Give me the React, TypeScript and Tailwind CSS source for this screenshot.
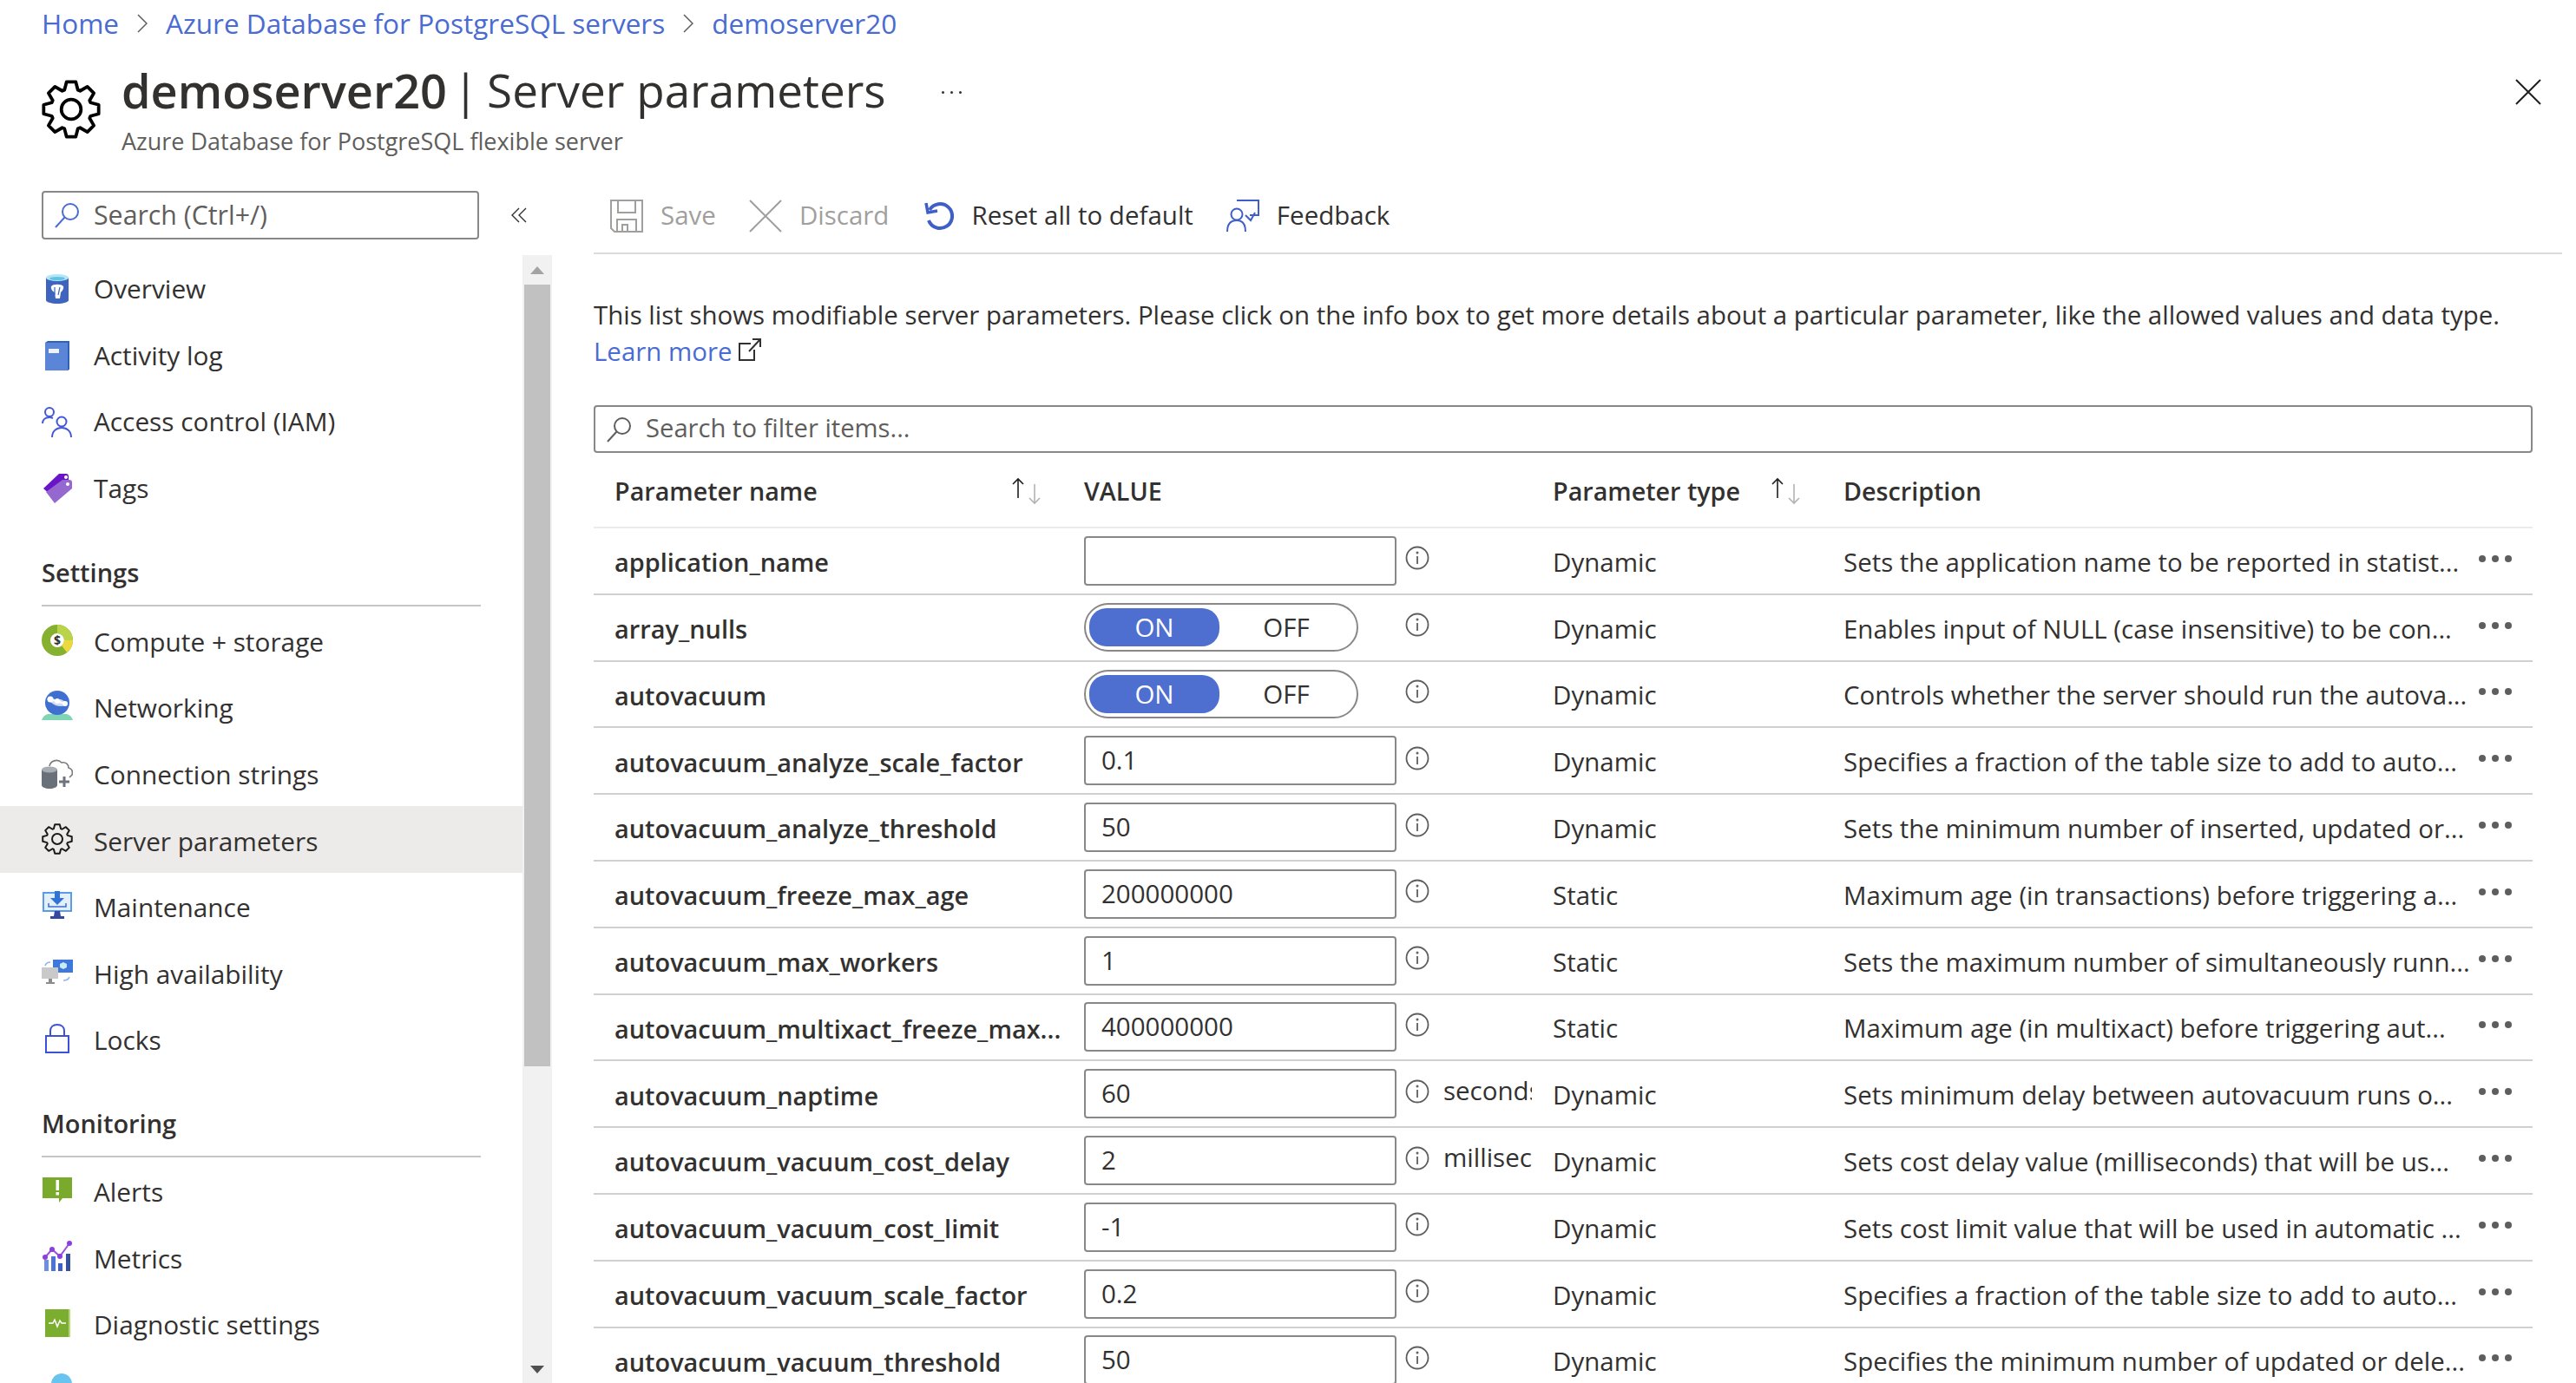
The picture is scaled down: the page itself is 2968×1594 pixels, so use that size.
const gearPath = (cx: number, cy: number, outer: number, inner: number, teeth: number) => {
  const pts: string[] = [];
  for (let i = 0; i < teeth; i++) {
    const a = (i * 2 * Math.PI) / teeth - Math.PI / 2;
    const w = Math.PI / teeth;
    const at = (r: number, t: number) =>
      `${(cx + r * Math.cos(t)).toFixed(2)} ${(cy + r * Math.sin(t)).toFixed(2)}`;
    pts.push(at(inner, a - w * 0.85), at(outer, a - w * 0.42), at(outer, a + w * 0.42), at(inner, a + w * 0.85));
  }
  return `M${pts.join("L")}Z`;
};

const Gear = ({ className, width = 2.2 }: { className: string; width?: number }) => (
  <svg viewBox="0 0 36 36" className={className} fill="none" stroke="currentColor" strokeWidth={width} strokeLinejoin="round">
    <path d={gearPath(18, 18, 17, 12.5, 8)} />
    <circle cx="18" cy="18" r="6" />
  </svg>
);

const SearchIcon = ({ color }: { color: string }) => (
  <svg viewBox="0 0 30 30" className="w-[30px] h-[30px] shrink-0" fill="none" stroke={color} strokeWidth="2">
    <circle cx="19" cy="11" r="9" />
    <path d="M12.5 17.5 2 29" />
  </svg>
);

const InfoIcon = () => (
  <svg viewBox="0 0 28 28" className="w-[28px] h-[28px] shrink-0 -mt-[6px]" fill="none" stroke="#605e5c" strokeWidth="1.8">
    <circle cx="14" cy="14" r="12.5" />
    <path d="M14 12v9" />
    <circle cx="14" cy="8" r="0.6" />
  </svg>
);

const OverviewIcon = () => (
  <svg viewBox="0 0 36 36" className="w-[36px] h-[36px]">
    <path d="M5 5v26c0 2 6 4 13 4s13-2 13-4V5z" fill="#3f64bd" />
    <ellipse cx="18" cy="5" rx="13" ry="4" fill="#b5e6f7" />
    <ellipse cx="18" cy="6" rx="9" ry="2" fill="#5fc3e8" />
    <path d="M11 15c2-3 12-3 14 0 1 3-2 6-3 7l-1 7h-5l-1-7c-2-1-5-4-4-7z" fill="#fff" />
    <path d="M15 16v9M21 16l-2 9" stroke="#3f64bd" strokeWidth="1.2" />
  </svg>
);

const ActivityIcon = () => (
  <svg viewBox="0 0 36 36" className="w-[36px] h-[36px]">
    <path d="M4 3h27v32H4z" fill="#5b86d8" />
    <path d="M7 1h25v33h-2V3H4z" fill="#2f62b8" />
    <rect x="8" y="10" width="12" height="5" fill="#eef3fb" />
  </svg>
);

const IamIcon = () => (
  <svg viewBox="0 0 36 36" className="w-[36px] h-[36px]" fill="none" stroke="#4257d6" strokeWidth="2">
    <circle cx="9" cy="7" r="5" />
    <path d="M1 20c0-4 3-7 8-7 2 0 3 .5 4 1" />
    <circle cx="23" cy="18" r="5.5" />
    <path d="M12 36c0-7 5-11 11-11s11 4 11 11" />
  </svg>
);

const TagsIcon = () => (
  <svg viewBox="0 0 36 36" className="w-[36px] h-[36px]">
    <path d="M2 18 20 1h8c2 0 3 1 3 3v4L13 28z" fill="#6a14c9" />
    <path d="M5 22 24 8h8c2 0 3 1 3 3v7L15 35z" fill="#9468cf" />
    <circle cx="28" cy="5" r="2" fill="#fff" />
    <circle cx="30" cy="13" r="2" fill="#fff" />
  </svg>
);

const ComputeIcon = () => (
  <svg viewBox="0 0 36 36" className="w-[36px] h-[36px]">
    <circle cx="18" cy="18" r="13" fill="none" stroke="#86b02f" strokeWidth="10" />
    <path d="M18 5a13 13 0 0 1 13 13" fill="none" stroke="#b9d44a" strokeWidth="10" />
    <path d="M31 18a13 13 0 0 1-5 10" fill="none" stroke="#ecd93f" strokeWidth="10" />
    <text x="18" y="23" textAnchor="middle" fontSize="14" fontWeight="700" fill="#323130" fontFamily="Open Sans">$</text>
  </svg>
);

const NetworkIcon = () => (
  <svg viewBox="0 0 36 36" className="w-[36px] h-[36px]">
    <path d="M0 34c2-5 5-7 8-7h20c3 0 6 2 8 7z" fill="#7fd6b5" />
    <circle cx="18" cy="14" r="14" fill="#3f6fd0" />
    <path d="M6 10c6-3 10 2 16 0l8 4c-4 6-12 4-16 2z" fill="#cfdcf5" />
    <path d="M10 10 27 15" stroke="#fff" strokeWidth="2" />
    <circle cx="10" cy="10" r="3.5" fill="#fff" />
    <circle cx="18" cy="12" r="3" fill="#fff" />
    <circle cx="27" cy="15" r="3" fill="#fff" />
  </svg>
);

const ConnectionIcon = () => (
  <svg viewBox="0 0 36 36" className="w-[36px] h-[36px]">
    <path d="M9 10c1-6 9-9 14-4 5-1 8 2 8 6 4 1 5 4 4 8l-3 3" fill="none" stroke="#7a7a7a" strokeWidth="1.6" />
    <path d="M0 14v18c0 2 4 4 9 4s9-2 9-4V14z" fill="#69707a" />
    <ellipse cx="9" cy="14" rx="9" ry="3.5" fill="#a8adb4" />
    <path d="M26 22v12M20 28h12" stroke="#6d737c" strokeWidth="3" />
  </svg>
);

const MaintenanceIcon = () => (
  <svg viewBox="0 0 36 36" className="w-[36px] h-[36px]">
    <rect x="2" y="3" width="32" height="21" fill="#e4effc" stroke="#5a9bea" strokeWidth="2" />
    <path d="M15 1h6v8h5l-8 8-8-8h5z" fill="#2f72d8" />
    <path d="M8 15v4h20v-4" fill="none" stroke="#3a6fc8" strokeWidth="1.5" />
    <path d="M15 24h6l1 6h4v3H10v-3h4z" fill="#354a9c" />
  </svg>
);

const HaIcon = () => (
  <svg viewBox="0 0 36 36" className="w-[36px] h-[36px]">
    <rect x="13" y="3" width="23" height="15" fill="#3f78dc" />
    <path d="M25 6l4 2v4l-4 2-4-2V8z" fill="#c6ecf8" />
    <rect x="0" y="12" width="19" height="13" fill="#c9c9c9" />
    <path d="M8 25h4v4h3v2H5v-2h3z" fill="#8c8c8c" />
    <path d="M4 10c1-3 3-4 6-4M32 23c-1 3-3 4-7 4" fill="none" stroke="#8fb4ea" strokeWidth="1.6" />
  </svg>
);

const LockIcon = () => (
  <svg viewBox="0 0 36 36" className="w-[36px] h-[36px]" fill="none" stroke="#3c50d8" strokeWidth="2">
    <rect x="5" y="15" width="26" height="19" />
    <path d="M10 15V9c0-4 3-7 8-7s8 3 8 7v6" />
  </svg>
);

const AlertIcon = () => (
  <svg viewBox="0 0 36 36" className="w-[36px] h-[36px]">
    <path d="M1 3h34v24H24l-4 5v-5H1z" fill="#79aa2b" />
    <rect x="16.5" y="6" width="3.5" height="12" fill="#fff" />
    <rect x="16.5" y="20" width="3.5" height="3.5" fill="#fff" />
  </svg>
);

const MetricsIcon = () => (
  <svg viewBox="0 0 36 36" className="w-[36px] h-[36px]">
    <rect x="3" y="22" width="5" height="13" fill="#6d8fe0" />
    <rect x="11" y="18" width="5" height="17" fill="#4b74d6" />
    <rect x="19" y="26" width="5" height="9" fill="#3f5fc4" />
    <rect x="28" y="15" width="5" height="20" fill="#35519f" />
    <path d="M4 19 12 10l9 8L32 3" fill="none" stroke="#9a4fe0" strokeWidth="2" />
    <circle cx="4" cy="19" r="3" fill="#8c3fe0" />
    <circle cx="12" cy="10" r="3" fill="#8c3fe0" />
    <circle cx="21" cy="18" r="3" fill="#8c3fe0" />
    <circle cx="32" cy="3" r="3" fill="#8c3fe0" />
  </svg>
);

const DiagnosticIcon = () => (
  <svg viewBox="0 0 36 36" className="w-[36px] h-[36px]">
    <rect x="4" y="2" width="28" height="32" fill="#7bad2e" />
    <path d="M31 2h2v32h-2z" fill="#b7d57a" />
    <path d="M8 18h5l2-4 3 8 3-7 2 3h5" fill="none" stroke="#fff" strokeWidth="1.5" />
  </svg>
);

const SmallGear = () => <Gear className="w-[36px] h-[36px] text-[#1b1a19]" width={2} />;

const sections = [
  {
    title: "",
    items: [
      { label: "Overview", icon: <OverviewIcon /> },
      { label: "Activity log", icon: <ActivityIcon /> },
      { label: "Access control (IAM)", icon: <IamIcon /> },
      { label: "Tags", icon: <TagsIcon /> },
    ],
  },
  {
    title: "Settings",
    items: [
      { label: "Compute + storage", icon: <ComputeIcon /> },
      { label: "Networking", icon: <NetworkIcon /> },
      { label: "Connection strings", icon: <ConnectionIcon /> },
      { label: "Server parameters", icon: <SmallGear />, active: true },
      { label: "Maintenance", icon: <MaintenanceIcon /> },
      { label: "High availability", icon: <HaIcon /> },
      { label: "Locks", icon: <LockIcon /> },
    ],
  },
  {
    title: "Monitoring",
    items: [
      { label: "Alerts", icon: <AlertIcon /> },
      { label: "Metrics", icon: <MetricsIcon /> },
      { label: "Diagnostic settings", icon: <DiagnosticIcon /> },
    ],
  },
];

const params = [
  { name: "application_name", value: "", kind: "Dynamic", desc: "Sets the application name to be reported in statist..." },
  { name: "array_nulls", toggle: true, kind: "Dynamic", desc: "Enables input of NULL (case insensitive) to be con..." },
  { name: "autovacuum", toggle: true, kind: "Dynamic", desc: "Controls whether the server should run the autova..." },
  { name: "autovacuum_analyze_scale_factor", value: "0.1", kind: "Dynamic", desc: "Specifies a fraction of the table size to add to auto..." },
  { name: "autovacuum_analyze_threshold", value: "50", kind: "Dynamic", desc: "Sets the minimum number of inserted, updated or..." },
  { name: "autovacuum_freeze_max_age", value: "200000000", kind: "Static", desc: "Maximum age (in transactions) before triggering a..." },
  { name: "autovacuum_max_workers", value: "1", kind: "Static", desc: "Sets the maximum number of simultaneously runn..." },
  { name: "autovacuum_multixact_freeze_max...", value: "400000000", kind: "Static", desc: "Maximum age (in multixact) before triggering aut..." },
  { name: "autovacuum_naptime", value: "60", unit: "seconds", kind: "Dynamic", desc: "Sets minimum delay between autovacuum runs o..." },
  { name: "autovacuum_vacuum_cost_delay", value: "2", unit: "milliseconds", kind: "Dynamic", desc: "Sets cost delay value (milliseconds) that will be us..." },
  { name: "autovacuum_vacuum_cost_limit", value: "-1", kind: "Dynamic", desc: "Sets cost limit value that will be used in automatic ..." },
  { name: "autovacuum_vacuum_scale_factor", value: "0.2", kind: "Dynamic", desc: "Specifies a fraction of the table size to add to auto..." },
  { name: "autovacuum_vacuum_threshold", value: "50", kind: "Dynamic", desc: "Specifies the minimum number of updated or dele..." },
];

const SortArrows = () => (
  <svg viewBox="0 0 34 32" className="w-[36px] h-[32px]" fill="none" strokeWidth="1.6">
    <path d="M9 24V2M3 8l6-6 6 6" stroke="#201f1e" />
    <path d="M28 8v22M22 24l6 6 6-6" stroke="#b5b3b1" />
  </svg>
);

const Dots = () => (
  <div className="flex gap-[7px] -mt-[5px]">
    <span className="w-[8px] h-[8px] rounded-full bg-[#605e5c]" />
    <span className="w-[8px] h-[8px] rounded-full bg-[#605e5c]" />
    <span className="w-[8px] h-[8px] rounded-full bg-[#605e5c]" />
  </div>
);

const App = () => {
  return (
    <div className="w-[2968px] h-[1594px] overflow-hidden bg-white text-[#323130] text-[29.5px] font-['Open_Sans',sans-serif]">
      <div className="h-[54px] pl-[48px] flex items-center gap-[21px] text-[31.5px] text-[#4a6bd2]">
        <span>Home</span>
        <svg viewBox="0 0 12 22" className="w-[12px] h-[22px]" fill="none" stroke="#605e5c" strokeWidth="1.5"><path d="M1 1l10 10L1 21" /></svg>
        <span>Azure Database for PostgreSQL servers</span>
        <svg viewBox="0 0 12 22" className="w-[12px] h-[22px]" fill="none" stroke="#605e5c" strokeWidth="1.5"><path d="M1 1l10 10L1 21" /></svg>
        <span>demoserver20</span>
      </div>

      <div className="h-[152px] pl-[48px] pr-[40px] flex items-start">
        <Gear className="w-[68px] h-[68px] mt-[38px] text-black" width={2} />
        <div className="ml-[24px] mt-[20px]">
          <div className="flex items-center h-[60px] text-[54px] leading-[60px] whitespace-nowrap">
            <span className="font-semibold">demoserver20</span>
            <span className="ml-[7px] text-[53px]">|</span>
            <span className="ml-[10px] text-[53px]">Server parameters</span>
          </div>
          <div className="text-[27px] leading-[36px] mt-[11px] text-[#605e5c]">Azure Database for PostgreSQL flexible server</div>
        </div>
        <div className="ml-[64px] mt-[51px] flex gap-[7px]">
          <span className="w-[3px] h-[3px] rounded-full bg-[#323130]" />
          <span className="w-[3px] h-[3px] rounded-full bg-[#323130]" />
          <span className="w-[3px] h-[3px] rounded-full bg-[#323130]" />
        </div>
        <svg viewBox="0 0 30 30" className="w-[30px] h-[30px] ml-auto mt-[37px]" fill="none" stroke="#201f1e" strokeWidth="2"><path d="M1 1l28 28M29 1 1 29" /></svg>
      </div>

      <div className="flex">
        <aside className="w-[636px] shrink-0">
          <div className="h-[88px] pl-[48px] pt-[14px] flex items-start">
            <div className="w-[504px] h-[56px] border-2 border-[#8a8886] rounded-[4px] flex items-center pl-[12px] gap-[16px] text-[30.3px] text-[#605e5c]">
              <SearchIcon color="#4a6bd2" />
              <span>Search (Ctrl+/)</span>
            </div>
            <svg viewBox="0 0 18 18" className="w-[18px] h-[18px] ml-[37px] mt-[19px]" fill="none" stroke="#323130" strokeWidth="1.4"><path d="M9 1 1 9l8 8M17 1 9 9l8 8" /></svg>
          </div>
          <div className="flex h-[1300px]">
            <nav className="w-[602px] shrink-0 pt-[1px] text-[29.8px]">
              {sections.map((s) => (
                <div key={s.title}>
                  {s.title && (
                    <div className="mx-[48px] h-[98px] pt-[39px] border-b-2 border-[#c8c6c4] font-semibold text-[29px] leading-[40px]">
                      <span className="block w-[504px]">{s.title}</span>
                    </div>
                  )}
                  {s.items.map((item) => (
                    <div key={item.label} className={`h-[76.6px] pl-[48px] flex items-center gap-[24px] ${item.active ? "bg-[#edebe9]" : ""}`}>
                      {item.icon}
                      <span className={s.title ? "pt-[5px]" : ""}>{item.label}</span>
                    </div>
                  ))}
                </div>
              ))}
              <div className="pl-[59px] pt-[20px]">
                <div className="w-[24px] h-[24px] rounded-full bg-[#68c3ee]" />
              </div>
            </nav>
            <div className="w-[34px] h-full bg-[#f1f1f1] flex flex-col items-center">
              <div className="h-[34px] flex items-center">
                <div className="w-0 h-0 border-x-[8px] border-x-transparent border-b-[9px] border-b-[#a3a3a3]" />
              </div>
              <div className="w-[30px] h-[901px] bg-[#c1c1c1]" />
              <div className="h-[360px] flex items-end pb-[6px]">
                <div className="w-0 h-0 border-x-[8px] border-x-transparent border-t-[9px] border-t-[#505050]" />
              </div>
            </div>
          </div>
        </aside>

        <main className="flex-1 min-w-0 pl-[48px]">
          <div className="mr-[16px] h-[87px] border-b-2 border-[#dcdcdc] pl-[19px] flex items-center whitespace-nowrap">
            <svg viewBox="0 0 38 38" className="w-[38px] h-[38px] text-[#a19f9d]" fill="none" stroke="currentColor" strokeWidth="2"><path d="M1 1h36v36H5l-4-4zM9 1v14h20V1M8 37V23h22v14M14 37v-8h6v8" /></svg>
            <span className="ml-[20px] text-[#a19f9d]">Save</span>
            <svg viewBox="0 0 38 38" className="ml-[38px] w-[38px] h-[38px]" fill="none" stroke="#a19f9d" strokeWidth="2"><path d="M1 1l36 36M37 1 1 37" /></svg>
            <span className="ml-[20px] text-[#a19f9d]">Discard</span>
            <svg viewBox="0 0 34 34" className="ml-[41px] w-[34px] h-[34px]" fill="none" stroke="#3f5fc8" strokeWidth="4"><path d="M6 10a14 14 0 1 1-1 12" /><path d="M2 2l2 11 11-2" strokeWidth="3.5" /></svg>
            <span className="ml-[20px]">Reset all to default</span>
            <svg viewBox="0 0 38 38" className="ml-[38px] w-[38px] h-[38px]" fill="none" stroke="#3f5fc8" strokeWidth="2"><path d="M12 1h25v17H27" /><path d="M22 18l6 6 5-9" /><circle cx="12" cy="17" r="6.5" /><path d="M1 37c0-9 4-13 11-13s10 4 10 13" /></svg>
            <span className="ml-[20px]">Feedback</span>
          </div>

          <div className="pt-[49px] leading-[42px] text-[29.45px]">
            <div className="whitespace-nowrap">This list shows modifiable server parameters. Please click on the info box to get more details about a particular parameter, like the allowed values and data type.</div>
            <div className="flex items-center gap-[7px]">
              <span className="text-[#4a6bd2]">Learn more</span>
              <svg viewBox="0 0 26 26" className="w-[26px] h-[26px] -mt-[4px]" fill="none" stroke="#323130" strokeWidth="2"><path d="M14 6H1v19h17V13M12 15 25 1M16 1h9v9" /></svg>
            </div>
          </div>

          <div className="w-[2234px]">
            <div className="mt-[41px] h-[55px] border-2 border-[#8a8886] rounded-[4px] flex items-center pl-[12px] gap-[16px] text-[29.2px] text-[#605e5c]">
              <SearchIcon color="#605e5c" />
              <span className="-mt-[1px]">Search to filter items...</span>
            </div>

            <div className="h-[87px] border-b-2 border-[#edebe9] grid grid-cols-[565px_540px_335px_1fr] items-center font-semibold text-[28.7px]">
              <div className="pl-[24px] pt-[3px] flex items-center justify-between pr-[50px]">
                <span>Parameter name</span>
                <SortArrows />
              </div>
              <div className="pt-[3px]">VALUE</div>
              <div className="pt-[3px] flex items-center justify-between pr-[50px]">
                <span>Parameter type</span>
                <SortArrows />
              </div>
              <div className="pt-[3px]">Description</div>
            </div>

            {params.map((p) => (
              <div key={p.name} className="h-[76.8px] border-b-2 border-[#d2d0ce] grid grid-cols-[565px_540px_335px_1fr] items-center">
                <div className="pl-[24px] pt-[3px] font-semibold whitespace-nowrap text-[28.9px]">{p.name}</div>
                <div className="flex items-center">
                  {p.toggle ? (
                    <>
                      <div className="w-[316px] h-[56px] border-2 border-[#8a8886] rounded-[28px] flex items-center px-[4px]">
                        <div className="w-[150px] h-[44px] rounded-[20px] bg-[#4f6fd0] text-white flex items-center justify-center">ON</div>
                        <div className="flex-1 text-center">OFF</div>
                      </div>
                      <span className="ml-[54px]"><InfoIcon /></span>
                    </>
                  ) : (
                    <>
                      <div className="w-[360px] h-[57px] border-2 border-[#8a8886] rounded-[4px] flex items-center pl-[18px]"><span className="-mt-[1px]">{p.value}</span></div>
                      <span className="ml-[10px]"><InfoIcon /></span>
                    </>
                  )}
                  {p.unit && <span className="ml-[16px] w-[102px] overflow-hidden whitespace-nowrap -mt-[7px]">{p.unit}</span>}
                </div>
                <div className="pt-[3px]">{p.kind}</div>
                <div className="flex items-center justify-between pr-[24px] whitespace-nowrap">
                  <span className="pt-[3px] text-[29.45px]">{p.desc}</span>
                  <Dots />
                </div>
              </div>
            ))}
          </div>
        </main>
      </div>
    </div>
  );
};

export default App;
